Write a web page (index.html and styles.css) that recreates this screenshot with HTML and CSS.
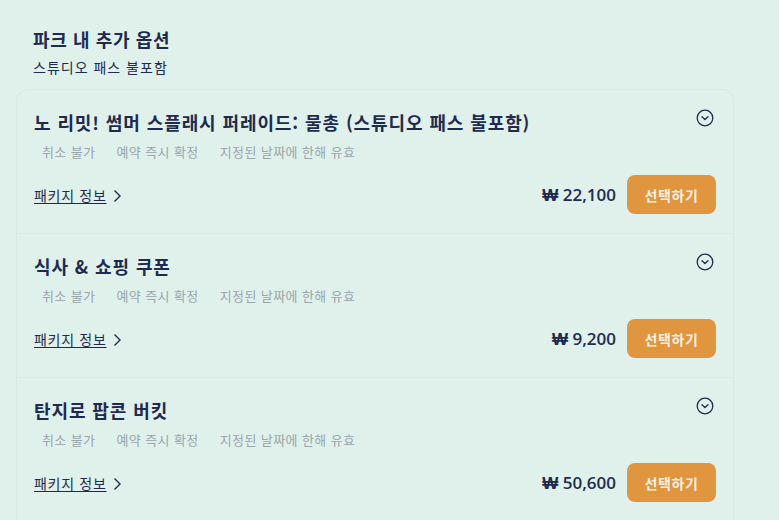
FILE: index.html
```html
<!DOCTYPE html>
<html lang="ko">
<head>
<meta charset="utf-8">
<link rel="stylesheet" href="styles.css">
</head>
<body>
<div class="page">
  <header class="head">
    <h1 class="title">파크 내 추가 옵션</h1>
    <p class="sub">스튜디오 패스 불포함</p>
  </header>
  <div class="card">
    <div class="row">
      <div class="top">
        <h2 class="name">노 리밋! 썸머 스플래시 퍼레이드: 물총 (스튜디오 패스 불포함)</h2>
        <svg class="toggle" viewBox="0 0 18 18" width="18" height="18"><circle cx="9" cy="9" r="7.8" fill="none" stroke="#1f2a4f" stroke-width="1.3"/><path d="M6 7.8 9 10.6 12 7.8" fill="none" stroke="#1f2a4f" stroke-width="1.3" stroke-linecap="round" stroke-linejoin="round"/></svg>
      </div>
      <div class="tags"><span class="tag">취소 불가</span><span class="tag">예약 즉시 확정</span><span class="tag">지정된 날짜에 한해 유효</span></div>
      <div class="foot">
        <a class="info">패키지 정보</a><svg class="chev" viewBox="0 0 10 14" width="10" height="14"><path d="M2.5 1.5 8 7 2.5 12.5" fill="none" stroke="#1f2a4f" stroke-width="1.4"/></svg>
        <span class="price">₩ 22,100</span>
        <button class="btn">선택하기</button>
      </div>
    </div>
    <div class="row">
      <div class="top">
        <h2 class="name">식사 &amp; 쇼핑 쿠폰</h2>
        <svg class="toggle" viewBox="0 0 18 18" width="18" height="18"><circle cx="9" cy="9" r="7.8" fill="none" stroke="#1f2a4f" stroke-width="1.3"/><path d="M6 7.8 9 10.6 12 7.8" fill="none" stroke="#1f2a4f" stroke-width="1.3" stroke-linecap="round" stroke-linejoin="round"/></svg>
      </div>
      <div class="tags"><span class="tag">취소 불가</span><span class="tag">예약 즉시 확정</span><span class="tag">지정된 날짜에 한해 유효</span></div>
      <div class="foot">
        <a class="info">패키지 정보</a><svg class="chev" viewBox="0 0 10 14" width="10" height="14"><path d="M2.5 1.5 8 7 2.5 12.5" fill="none" stroke="#1f2a4f" stroke-width="1.4"/></svg>
        <span class="price">₩ 9,200</span>
        <button class="btn">선택하기</button>
      </div>
    </div>
    <div class="row">
      <div class="top">
        <h2 class="name">탄지로 팝콘 버킷</h2>
        <svg class="toggle" viewBox="0 0 18 18" width="18" height="18"><circle cx="9" cy="9" r="7.8" fill="none" stroke="#1f2a4f" stroke-width="1.3"/><path d="M6 7.8 9 10.6 12 7.8" fill="none" stroke="#1f2a4f" stroke-width="1.3" stroke-linecap="round" stroke-linejoin="round"/></svg>
      </div>
      <div class="tags"><span class="tag">취소 불가</span><span class="tag">예약 즉시 확정</span><span class="tag">지정된 날짜에 한해 유효</span></div>
      <div class="foot">
        <a class="info">패키지 정보</a><svg class="chev" viewBox="0 0 10 14" width="10" height="14"><path d="M2.5 1.5 8 7 2.5 12.5" fill="none" stroke="#1f2a4f" stroke-width="1.4"/></svg>
        <span class="price">₩ 50,600</span>
        <button class="btn">선택하기</button>
      </div>
    </div>
  </div>
</div>
</body>
</html>
```
FILE: styles.css
```css
* { box-sizing: border-box; }
html, body { margin: 0; padding: 0; }
body {
  background: #dff1ea;
  font-family: "Noto Sans CJK KR", "Noto Sans", sans-serif;
  color: #1f2a4f;
  width: 779px;
  height: 520px;
  overflow: hidden;
}
.page { padding: 26px 45px 0 16px; }
.head { padding-left: 17px; }
.title { margin: 0; font-size: 18px; font-weight: 700; line-height: 26px; letter-spacing: 0.6px; }
.sub { margin: 5px 0 0; font-size: 14px; line-height: 20px; letter-spacing: 1px; }
.card {
  margin-top: 12px;
  border: 1px solid #d6ebe3;
  border-bottom: none;
  border-radius: 12px 12px 0 0;
}
.row {
  padding: 19px 17px 19px 17px;
  border-bottom: 1px solid #d6ebe3;
}
.top { display: flex; align-items: flex-start; justify-content: space-between; }
.name { margin: 0; font-size: 18px; font-weight: 600; line-height: 26px; letter-spacing: 0.9px; }
.toggle { margin-top: 0; margin-right: 2px; flex: none; }
.tags { display: flex; gap: 5px; margin-top: 8px; }
.tag { font-size: 13px; line-height: 18px; color: #9aa5ad; padding: 0 8px; letter-spacing: 0.4px; background: rgba(255,255,255,0.06); }
.foot { display: flex; align-items: center; margin-top: 14px; height: 39px; }
.info { font-size: 14px; letter-spacing: 0.7px; text-decoration: underline; text-underline-offset: 2px; color: #1f2a4f; }
.chev { margin-left: 5px; margin-top: 3px; }
.price { margin-left: auto; font-family: "Open Sans", sans-serif; font-size: 17px; font-weight: 600; margin-right: 11px; }
.btn {
  width: 89px; height: 39px;
  border: none; border-radius: 8px;
  background: #e0953f; color: #f7f1e6;
  font-family: "Noto Sans CJK KR", sans-serif; font-size: 14px; font-weight: 700; letter-spacing: 0.6px;
}
```
